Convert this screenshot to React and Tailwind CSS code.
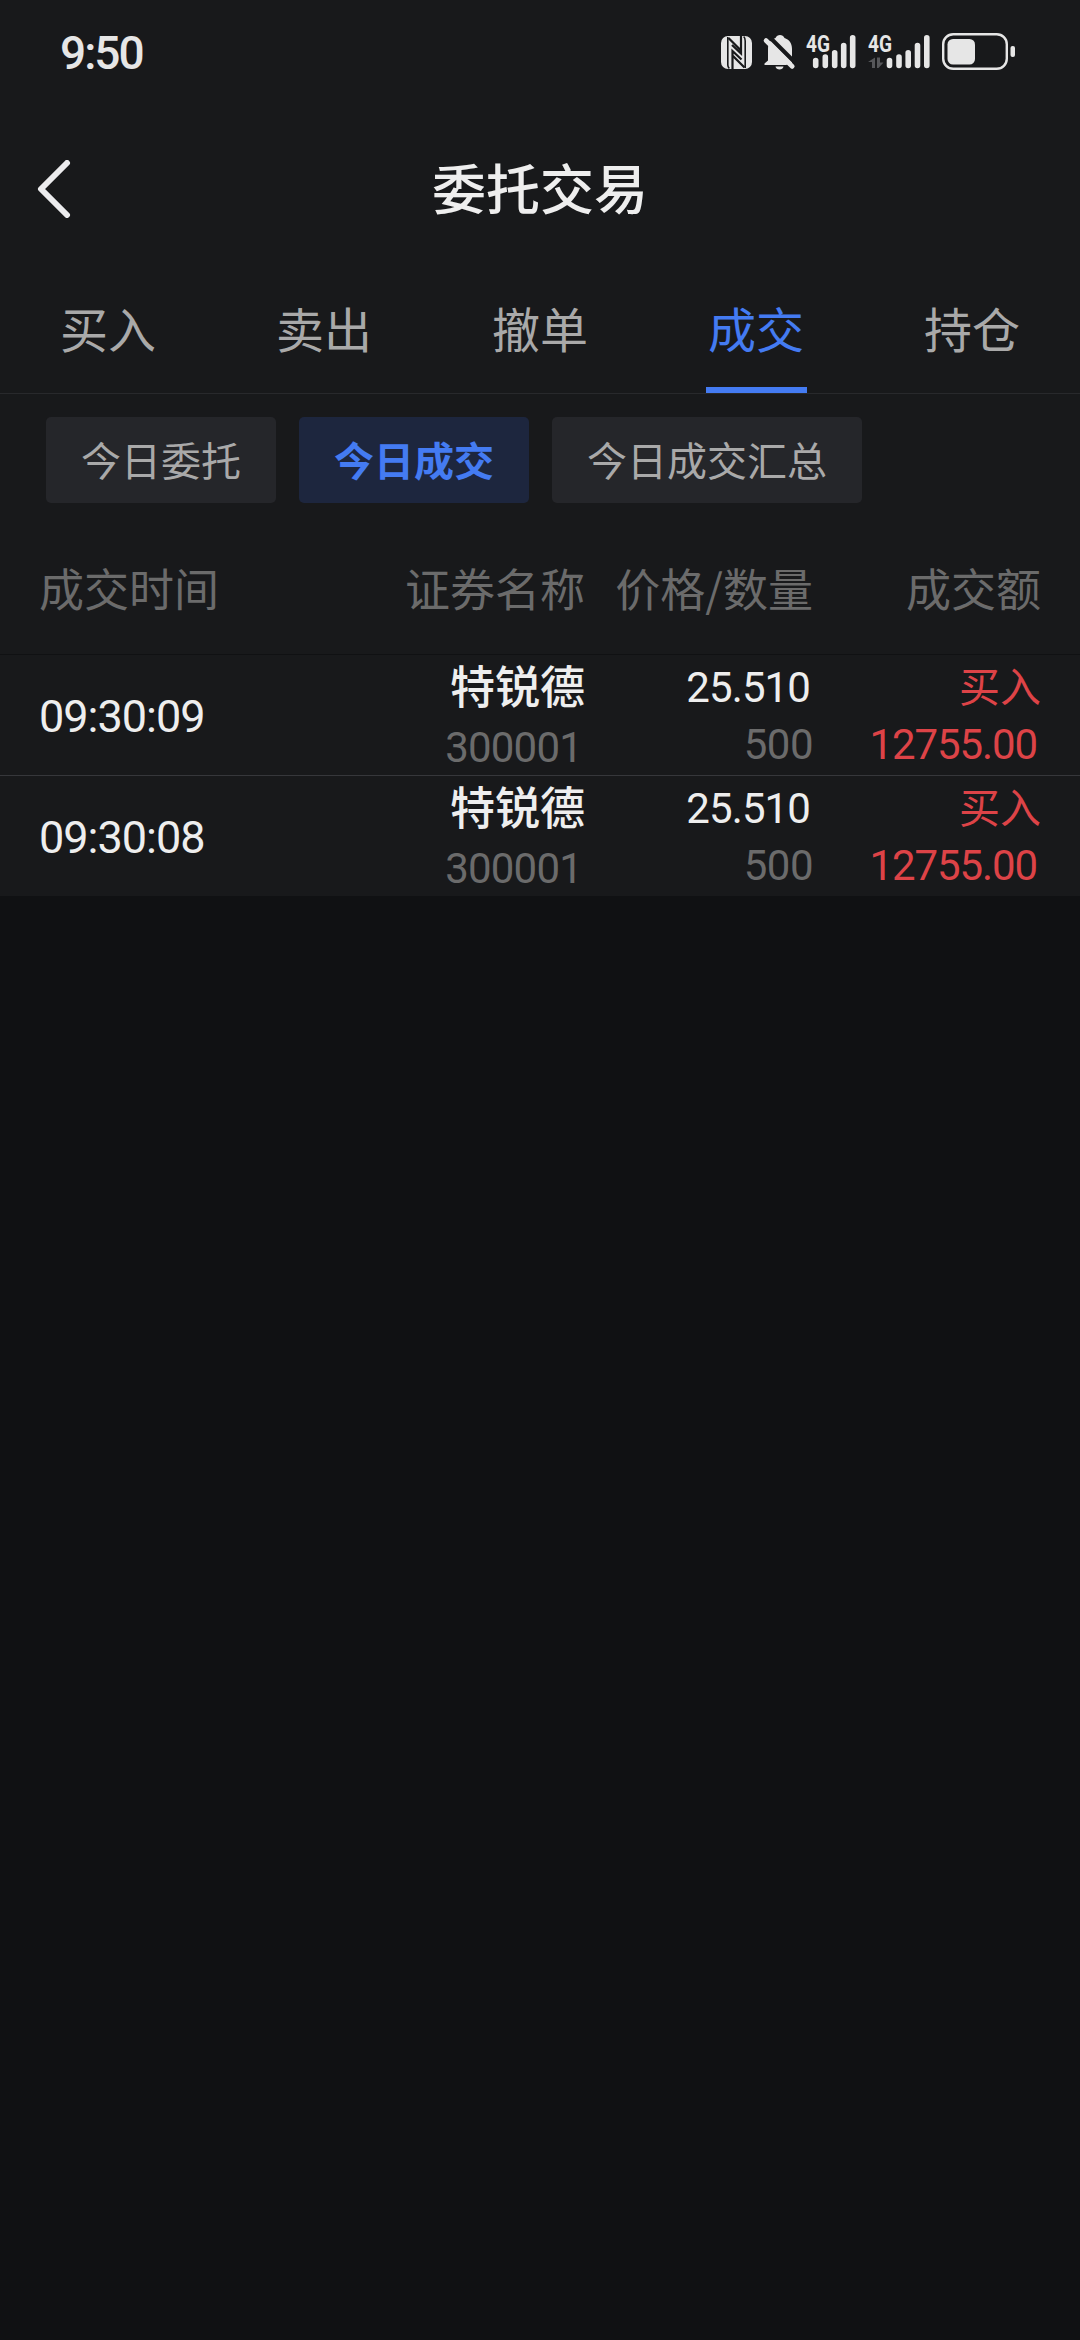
const tabs = ["买入", "卖出", "撤单", "成交", "持仓"];
const filters = ["今日委托", "今日成交", "今日成交汇总"];

const trades = [
  { time: "09:30:09", name: "特锐德", code: "300001", price: "25.510", qty: "500", side: "买入", amount: "12755.00" },
  { time: "09:30:08", name: "特锐德", code: "300001", price: "25.510", qty: "500", side: "买入", amount: "12755.00" },
];

function StatusBar() {
  return (
    <div className="flex h-[104px] items-center justify-between pr-[64px] pl-[60px] text-[#e6e6e6]">
      <span className="pt-[2px] font-[Roboto] text-[46px] leading-none font-medium tracking-[-2px]">9:50</span>
      <svg width="296" height="56" viewBox="720 24 296 56" fill="#e6e6e6" fontFamily="Roboto">
        {/* NFC */}
        <rect x="721" y="36" width="31" height="33" rx="7" />
        <g stroke="#18191b" strokeWidth="2.4" fill="none">
          <path d="M727.800 37v28q0 2 1.500 3.500" strokeWidth="1.600" />
          <path d="M728.500 38l12.500 12.500M741 36v17.500L732 45" strokeWidth="2.200" />
          <path d="M744.500 67.500L732 55M732.500 69V51l9 8.500" strokeWidth="2.200" />
          <path d="M745.200 68V41q0-3-1.500-4.500" strokeWidth="1.600" />
        </g>
        {/* Muted bell */}
        <path d="M764.500 65v-1.500l3.500-3V49c0-6 3-9.500 7.500-11 1.500-4 7.500-4 9 0 4.500 1.500 7.500 5 7.500 11v14l-6 2z" />
        <path d="M775.500 66.500h8c-.5 4-7.500 4-8 0z" />
        <path d="M768.500 36l26.500 26.500" stroke="#18191b" strokeWidth="4" />
        <path d="M766 40.500l26.300 26" stroke="#e6e6e6" strokeWidth="4.600" strokeLinecap="round" />
        {/* Signals */}
        <g stroke="#e6e6e6" strokeWidth="5.600" strokeLinecap="round">
          <path d="M815.700 65.500v-5M825.300 65.500V57M834.700 65.500V52.800M843.700 65.500V45.500M852.700 65.500V37.800" />
          <path d="M889.500 65.500v-5M899 65.500V57M908.200 65.500V52.800M917.500 65.500V45.500M926.800 65.500V37.800" />
        </g>
        <text x="806" y="51.800" fontSize="23" fontWeight="700" textLength="24" lengthAdjust="spacingAndGlyphs">4G</text>
        <text x="868" y="51.800" fontSize="23" fontWeight="700" textLength="24" lengthAdjust="spacingAndGlyphs">4G</text>
        <path d="M875 57.500V68h-3v-6h-4zM877 57.500h3v5h3.500l-5 5.500h-1.500z" fill="#56575a" />
        {/* Battery */}
        <rect x="943.200" y="34.200" width="63.600" height="34.600" rx="10" fill="none" stroke="#e6e6e6" strokeWidth="2.400" />
        <rect x="947.500" y="39" width="27.500" height="25.500" rx="5.500" />
        <rect x="1010.500" y="46" width="4.500" height="11" rx="2" />
      </svg>
    </div>
  );
}

function TradeRow({ trade }) {
  return (
    <div className="grid h-[121px] grid-cols-[1fr_290px_228px_228px] border-t border-[#36373b] px-[39px] first:border-[#101113]">
      <div className="flex items-center pb-px font-[Roboto] text-[45px] tracking-[-1px] text-[#eee]">{trade.time}</div>
      <div className="flex flex-col items-end pt-px">
        <span className="text-[45px] leading-[58px] font-medium text-[#eee]">{trade.name}</span>
        <span className="pt-[3px] pr-[3px] font-[Roboto] text-[42px] leading-[62px] tracking-[-0.8px] text-[#6b6b6b]">{trade.code}</span>
      </div>
      <div className="flex flex-col items-end pt-[4px]">
        <span className="pr-[3px] font-[Roboto] text-[42px] leading-[57px] tracking-[-0.9px] text-[#eee]">{trade.price}</span>
        <span className="font-[Roboto] text-[42px] leading-[58px] tracking-[-0.5px] text-[#6b6b6b]">{trade.qty}</span>
      </div>
      <div className="flex flex-col items-end text-[#dd4347]">
        <span className="text-[41px] leading-[58px]">{trade.side}</span>
        <span className="pt-[3px] pr-[4px] font-[Roboto] text-[42px] leading-[58px] tracking-[-1.1px]">{trade.amount}</span>
      </div>
    </div>
  );
}

export default function App() {
  return (
    <div className="h-[2340px] w-[1080px] overflow-hidden bg-[#101113] font-['Noto_Sans_CJK_SC',sans-serif]">
      <div className="bg-[#18191b]">
        <StatusBar />

        {/* Header */}
        <div className="grid h-[169px] grid-cols-3 items-center px-[37px]">
          <svg width="34" height="58" viewBox="0 0 34 58" fill="none" stroke="#ececee" strokeWidth="6" strokeLinecap="round" strokeLinejoin="round">
            <path d="M30 3L4 29l26 26" />
          </svg>
          <h1 className="pb-[4px] text-center text-[54px] leading-none font-medium text-[#eee]">委托交易</h1>
        </div>

        <div className="grid h-[121px] grid-cols-5 border-b border-[#28292c]">
          {tabs.map((tab) => (
            <button
              key={tab}
              className={`mx-auto flex w-[101px] items-center justify-center border-b-6 pb-[6px] text-[48px] ${
                tab === "成交" ? "border-[#447bf2] text-[#447bf2]" : "border-transparent text-[#a9a9a9]"
              }`}
            >
              {tab}
            </button>
          ))}
        </div>

        <div className="flex gap-[23px] px-[46px] pt-[23px]">
          {filters.map((item) => (
            <button
              key={item}
              className={`h-[86px] rounded-[5px] px-[35px] pb-[3px] text-[40px] ${
                item === "今日成交" ? "bg-[#1d263e] font-bold text-[#447bf2]" : "bg-[#25262a] text-[#a9a9a9]"
              }`}
            >
              {item}
            </button>
          ))}
        </div>

        {/* Column titles */}
        <div className="grid h-[151px] grid-cols-[1fr_290px_228px_228px] items-center px-[39px] pt-[17px] text-right text-[45px] leading-none text-[#6b6b6b]">
          <span className="text-left">成交时间</span>
          <span>证券名称</span>
          <span>价格/数量</span>
          <span>成交额</span>
        </div>

        <div>
          {trades.map((trade) => (
            <TradeRow key={trade.time} trade={trade} />
          ))}
        </div>
      </div>
    </div>
  );
}
